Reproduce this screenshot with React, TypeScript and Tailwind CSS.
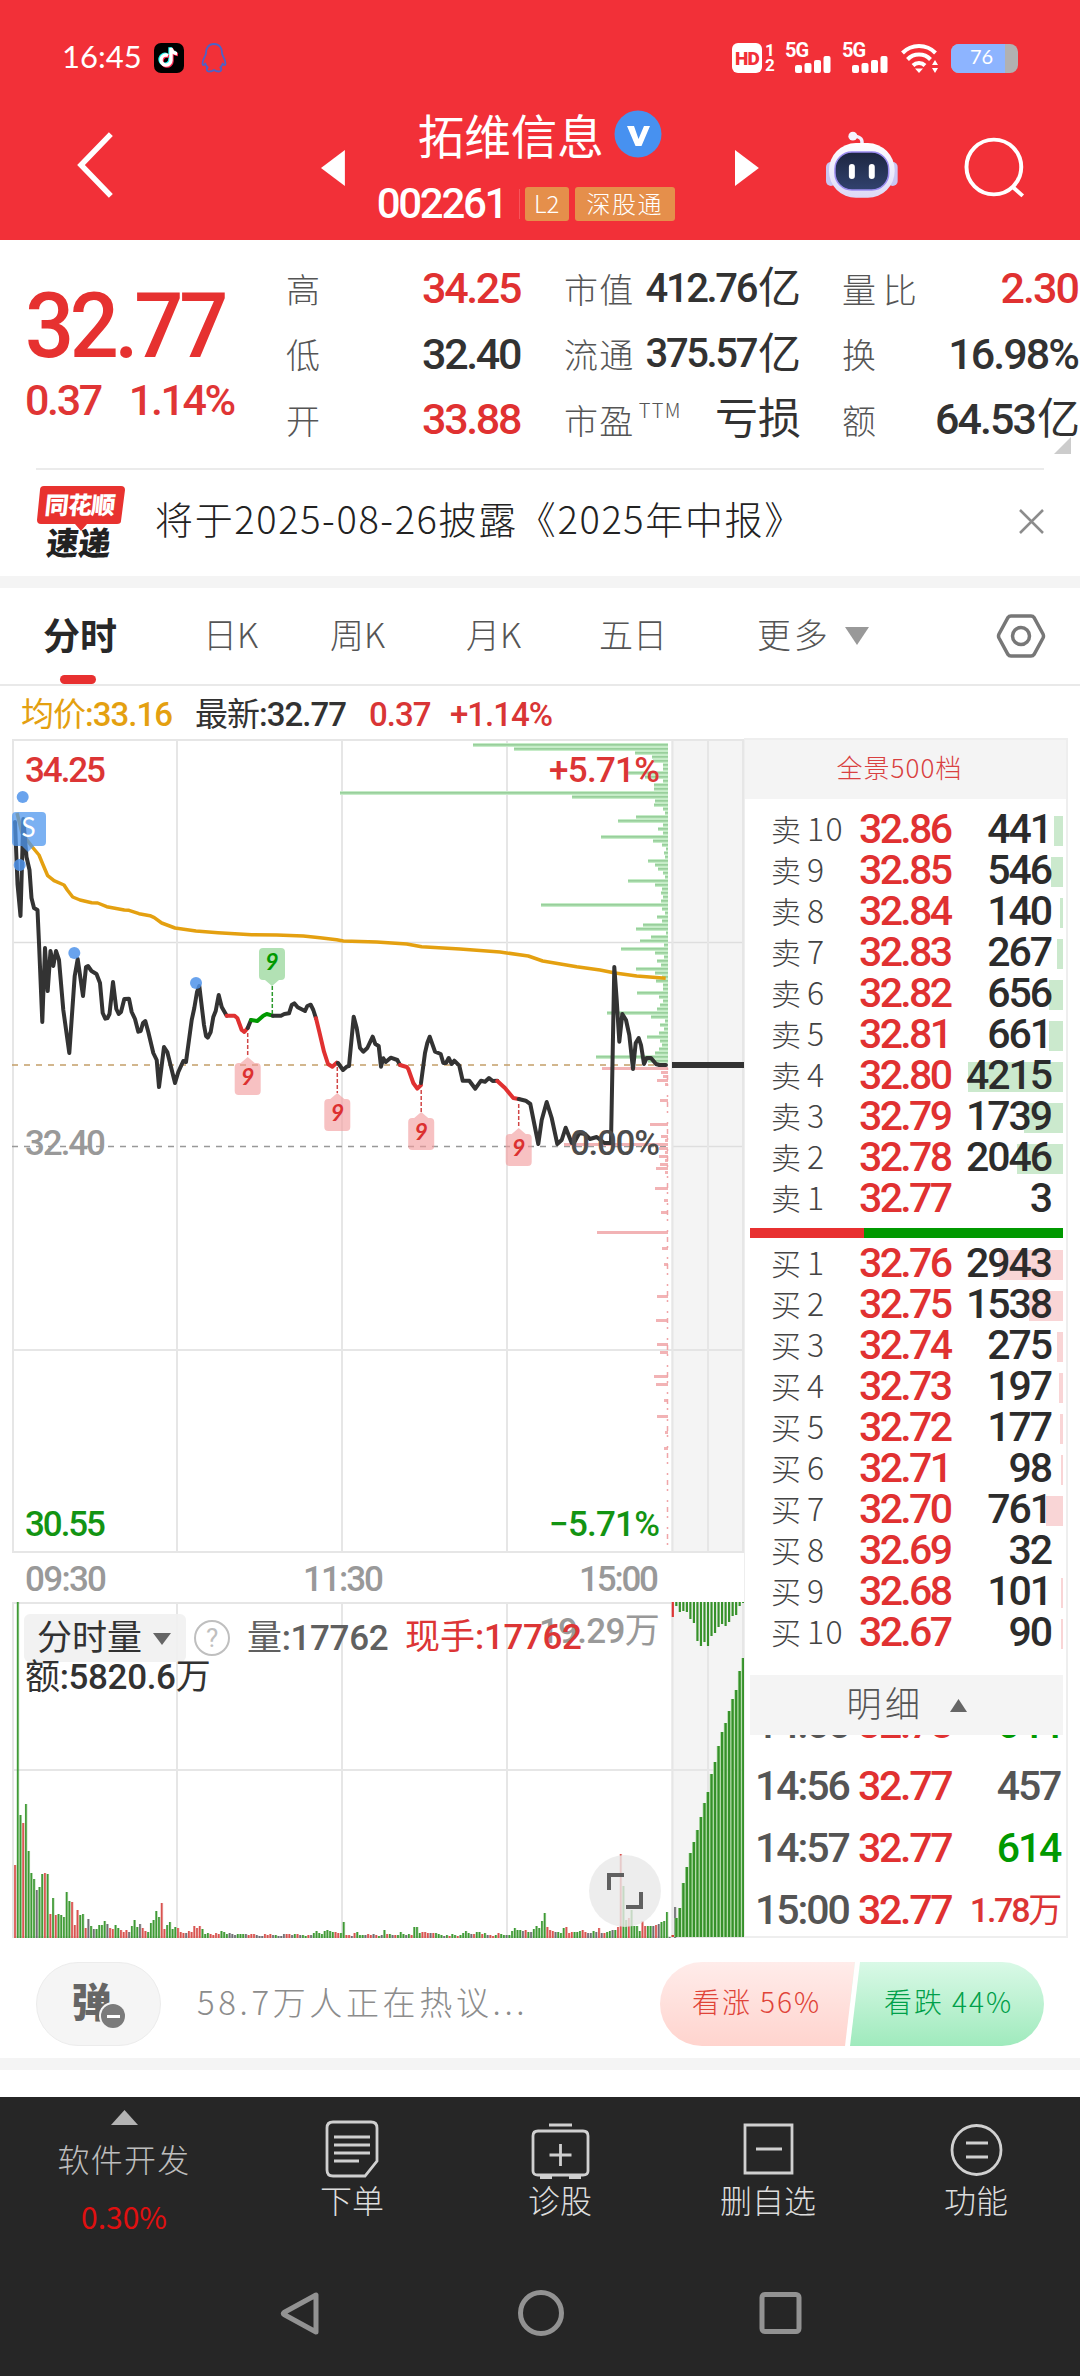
import React from 'react';
import clsx from 'clsx';

const NUM = "font-['Roboto','Noto_Sans_CJK_SC',sans-serif] font-medium whitespace-nowrap";

const stats = [
  {
    className: 'w-[236px] ml-[46px]',
    numberClass: 'text-[43px] tracking-[-0.055em]',
    labelClass: 'tracking-normal',
    rows: [
      { name: '高', value: '34.25', unit: '', red: true },
      { name: '低', value: '32.40', unit: '' },
      { name: '开', value: '33.88', unit: '', red: true },
    ],
  },
  {
    className: 'w-[237px] ml-[42px]',
    numberClass: 'text-[40px] tracking-[-0.06em]',
    labelClass: 'tracking-[0.04em]',
    rows: [
      { name: '市值', value: '412.76', unit: '亿' },
      { name: '流通', value: '375.57', unit: '亿' },
      { name: '市盈', sup: 'TTM', value: '', unit: '亏损' },
    ],
  },
  {
    className: 'w-[238px] ml-[41px]',
    numberClass: 'text-[43px] tracking-[-0.045em]',
    labelClass: 'tracking-[0.2em]',
    rows: [
      { name: '量比', value: '2.30', unit: '', red: true },
      { name: '换', value: '16.98%', unit: '' },
      { name: '额', value: '64.53', unit: '亿' },
    ],
  },
];

const tabs = [
  { name: '日K', className: 'w-[50px] ml-[85px]' },
  { name: '周K', className: 'w-[56px] ml-[77px]' },
  { name: '月K', className: 'w-[56px] ml-[80px]' },
  { name: '五日', className: 'w-[72px] ml-[77px]' },
];

const asks = [
  { level: '10', price: '32.86', volume: '441', bar: 9 },
  { level: '9', price: '32.85', volume: '546', bar: 12 },
  { level: '8', price: '32.84', volume: '140', bar: 3 },
  { level: '7', price: '32.83', volume: '267', bar: 6 },
  { level: '6', price: '32.82', volume: '656', bar: 14 },
  { level: '5', price: '32.81', volume: '661', bar: 14 },
  { level: '4', price: '32.80', volume: '4215', bar: 95 },
  { level: '3', price: '32.79', volume: '1739', bar: 39 },
  { level: '2', price: '32.78', volume: '2046', bar: 46 },
  { level: '1', price: '32.77', volume: '3', bar: 0 },
];

const bids = [
  { level: '1', price: '32.76', volume: '2943', bar: 64 },
  { level: '2', price: '32.75', volume: '1538', bar: 34 },
  { level: '3', price: '32.74', volume: '275', bar: 6 },
  { level: '4', price: '32.73', volume: '197', bar: 4 },
  { level: '5', price: '32.72', volume: '177', bar: 3 },
  { level: '6', price: '32.71', volume: '98', bar: 2 },
  { level: '7', price: '32.70', volume: '761', bar: 17 },
  { level: '8', price: '32.69', volume: '32', bar: 0 },
  { level: '9', price: '32.68', volume: '101', bar: 2 },
  { level: '10', price: '32.67', volume: '90', bar: 2 },
];

const trades = [
  { time: '14:55', price: '32.78', volume: '644', color: 'text-[#009900]' },
  { time: '14:56', price: '32.77', volume: '457', color: 'text-[#555555]' },
  { time: '14:57', price: '32.77', volume: '614', color: 'text-[#009900]' },
  { time: '15:00', price: '32.77', volume: '1.78', unit: '万', color: 'text-[#dc3535]' },
];

// price line, split where the nine-count signal changes its colour
const priceSegments = [
  {
    color: '#333333',
    points:
      '15,822 17.5,884 20.5,916 23.3,819 26.5,857 29.5,870 31.5,898 34,908 37.5,910 39,943 42.3,1022 45,948 47.7,991 50.5,951 53.3,966 56,951 59,960 63.3,1010 69.3,1053 74.7,976 77.7,959 83,996 86,967 88,966 91.5,971 96.5,974 100,983 102.7,1013 105.3,1018.7 107.5,1018 109.5,1014 113,982 116.3,1009 118.7,1014 121,1012 124.3,999 129,998.7 131.7,1012 135,1019 138.3,1031.7 140.7,1031 143,1023 145.3,1021 148.3,1032 153.3,1053 156.7,1060 159,1087 164,1047 167.3,1052 175,1083 178.3,1072 183.3,1061 186,1062 191.7,1020 194.3,1008 197,992 199.3,986 204,1025 206,1036 207.7,1037.7 210.7,1032 213.3,1017 215.7,1011 218.7,995 221.7,1007 226.7,1015.7',
  },
  { color: '#e03131', points: '226.7,1015.7 234.3,1015.7 237.3,1018 241.7,1030 244.3,1032 247.7,1028' },
  { color: '#333333', points: '247.7,1028 251,1020' },
  { color: '#009900', points: '251,1020 257.3,1021 263.3,1015.7 266.7,1014 272.7,1015.7' },
  {
    color: '#333333',
    points: '272.7,1015.7 281,1015.7 284.3,1014 289,1013.3 291.7,1005 294.3,1003.3 297.7,1007.3 305,1011 307.3,1006 310.7,1004.7 313.3,1010 316,1018.3',
  },
  { color: '#e03131', points: '316,1018.3 319.3,1031.7 324,1051.7 328,1064 332.3,1066.7 336.7,1062.7' },
  {
    color: '#333333',
    points:
      '338,1063 343,1070 346.7,1066.7 349,1066 353.7,1016.7 356.7,1028 360,1048 363.3,1051.7 367.3,1048 372.7,1036.7 375.3,1044 378.7,1046 381,1066.7 383.3,1058.3 385.7,1062 390.7,1057.7 397.3,1060 400,1065',
  },
  { color: '#e03131', points: '400,1065 406.7,1067 408.3,1069 413.3,1083 417.3,1088.7 421,1085' },
  {
    color: '#333333',
    points:
      '421,1083 425,1053 427.3,1043 429.7,1036.7 435,1051.7 440.7,1054 443.3,1063 446,1063 448.7,1058 451.7,1064 454.3,1060.7 459.3,1065.7 462.7,1080.7 469.3,1080.7 475.3,1088.7 481,1080.7 485,1081.7 489,1078 492.7,1081 497.3,1080.7',
  },
  { color: '#e03131', points: '497.3,1081 505,1088 513.3,1098 518.7,1099' },
  {
    color: '#333333',
    points:
      '518.7,1099 525.7,1100.7 530.3,1104 538.3,1144 541.7,1120 546.7,1102 551.7,1118 557.3,1144 561.7,1140 565.7,1127.7 571.7,1143 574,1143 579.3,1133 585,1134 590,1139 596.7,1137 604.3,1143 611,1143 614.3,967 616.7,1000 619.3,1041.7 622.3,1014 626,1020 629.3,1035 633,1069 635.7,1043 638.7,1038 641,1045 644,1064 646.7,1058 651,1058 656,1064 659.3,1065 666,1065',
  },
];

const averagePoints =
  '17,813 22,833 27,840 32.3,847 39,855 42.7,864 47.7,875.7 54,880.7 64,885 67.3,890 72.7,897 80,900 91.7,902.7 97.7,903 106.7,906.7 124.3,910 129,910.3 139,913.7 150,915.7 154.3,917.7 161.7,923 175,928 196,931 218,932.7 251.7,934.7 276.7,935 303.3,936 320,937.7 336.7,939.7 343.3,941 376.7,942 406.7,944 421.7,946.7 460,949 500,952 528.3,956 542.7,961 576.7,966.7 600,970 615,973 636.7,976 665.7,978.3';

// resting orders by price, one entry every 4px from the top
const askDepth = [
  195, 154, 33, 16, 15, 5, 5, 41, 23, 5, 14, 14, 328, 96, 13, 14, 5, 3, 32, 50, 5, 10, 5, 67, 15, 6, 2, 4, 3, 20, 13, 10, 5, 3, 40,
  13, 6, 7, 5, 7, 127, 6, 3, 11, 6, 25, 32, 2, 17, 28, 4, 47, 13, 4, 11, 7, 32, 13, 6, 12, 5, 5, 31, 9, 5, 8, 11, 61, 17, 3, 8, 4,
  9, 21, 8, 6, 9, 13, 72, 20,
];

const bidDepth: Record<number, number> = {
  81: 66, 82: 7, 83: 5, 84: 11, 85: 3, 89: 8, 95: 18, 98: 7, 99: 3, 100: 104, 101: 9, 102: 3, 103: 9, 104: 3, 105: 8, 106: 12,
  107: 3, 111: 13, 114: 4, 117: 7, 122: 71, 126: 6, 130: 4, 138: 11, 144: 12, 150: 11, 152: 8, 158: 14, 160: 12, 164: 4, 168: 11,
  172: 3, 176: 4,
};

const volumes =
  'r73 g336 g123 r115 g134 g87 g65 g59 k48 g51 g64 r65 g64 r24 g40 r23 g24 g23 g21 g46 g37 r36 r13 r28 g23 g24 r10 k19 g12 k9 g9 g13 g13 g17 k14 r10 r9 g13 g10 r8 r6 r8 k6 g12 g18 g11 k14 r10 r7 g6 g15 g18 g27 g21 r35 r9 g13 g16 g9 g11 r10 r6 r5 k5 r7 r6 r12 r10 r12 g9 g4 g5 r4 r3 r5 r4 g7 g6 g4 k5 k4 k3 g4 g4 g4 k4 r3 r4 r4 k3 k2 k2 r4 r3 r4 k3 g3 k2 k2 k4 r4 r4 k3 g4 r4 k3 g3 g2 r3 k3 g5 g7 g5 g4 g7 g8 g7 g6 r6 r5 g5 g16 r3 r3 k2 r5 g6 g3 g3 k3 r4 r3 k4 r3 g2 k3 g8 r4 g4 k3 r3 g3 g6 g4 k3 g4 r3 g11 g11 g5 r6 r6 r5 k5 r5 g5 g4 g3 k2 g3 r2 g4 g3 r2 g3 g5 g7 g5 k4 r4 g6 g6 r4 g5 k3 r3 r2 g3 r5 g4 g3 k3 g3 g7 g10 g8 g8 k7 r8 g6 k6 g9 g12 g10 g17 g25 r11 r8 r7 k6 g6 g5 g10 r11 r5 r6 g6 g6 g7 r8 r6 k5 k5 g7 k6 r10 k5 r5 g6 g7 k8 g8 r11 r84 g52 g18 r20 g28 g12 g12 g7 r17 r12 g12 g12 k12 r13 k14 g16 g17 g26 k1 w0 k31'.split(' ');

const auctionVolumes = [2, 19, 29, 54, 70, 84, 95, 107, 120, 134, 145, 163, 175, 191, 205, 214, 226, 238, 247, 266, 279];
const auctionUnmatched = [15, 4, 10, 9, 10, 17, 21, 39, 44, 40, 44, 34, 31, 25, 22, 24, 20, 14, 13, 4, 1];

const barColors: Record<string, string> = { r: '#d9534f', g: '#3f9a35', k: '#6f6f72', w: 'none' };

const signals = [
  { x: 247.7, from: 1033, tip: 1057 },
  { x: 337.3, from: 1067, tip: 1093 },
  { x: 421.2, from: 1090, tip: 1112 },
  { x: 518.7, from: 1104, tip: 1128 },
];

function StatusBar() {
  return (
    <div className="flex h-[76px] items-end px-[62px] pb-[3px] text-white">
      <div className="flex h-[30px] items-center">
        <span className="w-[76px] text-center font-['Lato','Noto_Sans_CJK_SC',sans-serif] text-[31px] leading-[26px] -mt-[4px]">16:45</span>
        <span className="ml-[16px] flex h-[30px] w-[30px] items-center justify-center rounded-[7px] bg-black">
          <svg width="22" height="24" viewBox="0 0 22 24" fill="none" strokeWidth="3.4">
            <path d="M10 9.500a5 5 0 1 0 3 4.700V2c.6 3.500 3 5.300 6 5.600" stroke="#25f4ee" transform="translate(-1 -.8)" />
            <path d="M10 9.500a5 5 0 1 0 3 4.700V2c.6 3.500 3 5.300 6 5.600" stroke="#fe2c55" transform="translate(1 1)" />
            <path d="M10 9.500a5 5 0 1 0 3 4.700V2c.6 3.500 3 5.300 6 5.600" stroke="#fff" />
          </svg>
        </span>
        <svg className="ml-[17px]" width="26" height="30" viewBox="0 0 26 30" fill="none" stroke="#4b63c8" strokeWidth="1.8" strokeLinejoin="round">
          <path d="M13 1C7.500 1 5 5 5 10c0 3-3.500 6-3.500 10.500 0 2 .8 2.500 2.800 0 .5 2 1.200 3 2.400 4-1.500.8-1.700 4 1.500 4 2.300 0 3.600-.6 4.800-1.500 1.200.9 2.500 1.500 4.800 1.500 3.200 0 3-3.200 1.500-4 1.200-1 1.900-2 2.400-4 2 2.500 2.800 2 2.800 0C24.500 16 21 13 21 10c0-5-2.500-9-8-9z" />
        </svg>
      </div>
      <div className="ml-auto flex h-[30px] items-end font-['Roboto',sans-serif]">
        <span className="flex h-[30px] w-[30px] items-center justify-center rounded-[6px] bg-white text-[19px] font-black leading-none tracking-[-0.04em] text-[#f22f37]">HD</span>
        <span className="ml-[3px] flex w-[10px] flex-col text-[17px] font-bold leading-[15px]">
          <span>1</span>
          <span>2</span>
        </span>
        <Signal className="ml-[10px]" />
        <Signal className="ml-[11px]" />
        <svg className="ml-[13px]" width="38" height="30" viewBox="0 0 38 30" fill="none" stroke="#fff" strokeWidth="4">
          <path d="M1.500 10a23 23 0 0 1 33 0M6.500 16.500a16 16 0 0 1 23 0M12 22.500a8.500 8.500 0 0 1 12 0" />
          <path d="M14 25.500h8L18 30zM31 22l3-5 3 5zM31 25l3 5 3-5z" fill="#fff" stroke="none" />
        </svg>
        <span className="relative ml-[12px] flex h-[29px] w-[67px] items-center justify-center overflow-hidden rounded-[8px] bg-[#b1b1b1]">
          <span className="absolute inset-y-0 left-0 w-[54px] bg-[#8db4ff]" />
          <span className="relative mr-[6px] -mt-[5px] font-['Lato',sans-serif] text-[20px] leading-none">76</span>
        </span>
      </div>
    </div>
  );
}

function Signal({ className }: { className: string }) {
  return (
    <span className={clsx('relative h-[30px] w-[46px]', className)}>
      <span className="absolute left-0 top-0 text-[20px] font-bold leading-[15px] tracking-[-0.05em]">5G</span>
      <svg className="absolute bottom-0 left-[10px]" width="36" height="17" viewBox="0 0 36 17" fill="#fff">
        <rect x="0" y="9" width="7" height="8" rx="2" />
        <rect x="9.500" y="7" width="7" height="10" rx="2" />
        <rect x="19" y="4" width="7" height="13" rx="2" />
        <rect x="28.500" y="0" width="7" height="17" rx="2" />
      </svg>
    </span>
  );
}

function TitleBar() {
  return (
    <div className="flex h-[164px] items-start pl-[77px] pr-[54px] text-white">
      <svg className="mt-[56px]" width="36" height="66" viewBox="0 0 36 66" fill="none" stroke="#fff" strokeWidth="5.500">
        <path d="M34 2 4 33l30 31" />
      </svg>
      <svg className="ml-[208px] mt-[74px]" width="24" height="36" viewBox="0 0 24 36">
        <path d="M24 0v36L0 18z" fill="#fff" />
      </svg>
      <div className="ml-[32px] w-[298px]">
        <div className="flex items-center pl-[41px] pt-[32px]">
          <span className="text-[46.5px] leading-[52px]">拓维信息</span>
          <svg className="ml-[10px]" width="48" height="48" viewBox="0 0 48 48">
            <circle cx="24" cy="24" r="23.500" fill="#4791f0" />
            <path d="M13 16h7l4.500 13L30 16h6l-8.500 20h-6z" fill="#fff" />
          </svg>
        </div>
        <div className="mt-[25px] flex h-[38px] items-center">
          <span className={clsx(NUM, 'w-[128px] text-[42px] leading-[38px] tracking-[-0.055em]')}>002261</span>
          <span className="ml-[14px] h-[30px] w-px bg-[#f6555b]" />
          <span className="ml-[5px] h-[34px] w-[44px] rounded-[3px] bg-[#e58f4b] text-center text-[24px] font-light leading-[32px]">L2</span>
          <span className="ml-[6px] h-[34px] w-[100px] shrink-0 rounded-[3px] bg-[#e58f4b] text-center text-[24px] font-light leading-[32px] tracking-[0.06em]">深股通</span>
        </div>
      </div>
      <svg className="ml-[60px] mt-[74px]" width="24" height="36" viewBox="0 0 24 36">
        <path d="M0 0v36l24-18z" fill="#fff" />
      </svg>
      <svg className="ml-[66px] mt-[55px]" width="74" height="68" viewBox="0 0 74 68">
        <defs>
          <linearGradient id="shell" x1="0" y1="0" x2="0" y2="1">
            <stop offset="0" stopColor="#fff" />
            <stop offset="1" stopColor="#dcd9f7" />
          </linearGradient>
          <linearGradient id="visor" x1="0" y1="0" x2="0" y2="1">
            <stop offset="0" stopColor="#1d2640" />
            <stop offset="1" stopColor="#31426e" />
          </linearGradient>
        </defs>
        <path d="M37 14c1-6-1-8-7-9" stroke="#f3f0ff" strokeWidth="3.500" fill="none" />
        <circle cx="28" cy="5" r="4.500" fill="#f6f4ff" />
        <rect x="1" y="31" width="10" height="24" rx="5" fill="#c9c6f2" />
        <rect x="63" y="31" width="10" height="24" rx="5" fill="#c9c6f2" />
        <rect x="4" y="12" width="66" height="55" rx="27" fill="url(#shell)" />
        <rect x="10" y="21" width="54" height="38" rx="17" fill="url(#visor)" stroke="#9c8cf0" strokeWidth="1.500" />
        <rect x="24" y="33" width="6" height="15" rx="3" fill="#fff" />
        <rect x="44" y="33" width="6" height="15" rx="3" fill="#fff" />
      </svg>
      <svg className="ml-[66px] mt-[60px]" width="62" height="62" viewBox="0 0 62 62" fill="none" stroke="#fff" strokeWidth="4">
        <circle cx="30" cy="31" r="27.500" />
        <path d="m49 51 10 9" />
      </svg>
    </div>
  );
}

function QuotePanel() {
  return (
    <section className="relative flex h-[228px] bg-white pt-[16px]">
      <div className="w-[240px] shrink-0 pl-[25px]">
        <div className={clsx(NUM, 'mt-[23px] origin-left scale-x-95 text-[91px] leading-[94px] tracking-[-0.05em] text-[#e63130]')}>32.77</div>
        <div className={clsx(NUM, 'mt-[7px] flex gap-[28px] text-[43px] leading-[40px] tracking-[-0.055em] text-[#e03535]')}>
          <span>0.37</span>
          <span>1.14%</span>
        </div>
      </div>
      {stats.map((column, index) => (
        <div key={index} className={clsx('flex shrink-0 flex-col', column.className)}>
          {column.rows.map((item) => (
            <div key={item.name} className="flex h-[65.500px] items-center justify-between">
              <span className={clsx('flex text-[34px] font-light leading-none text-[#555555]', column.labelClass)}>
                {item.name}
                {'sup' in item && <span className="-mt-[3px] ml-[4px] text-[20px]">{item.sup}</span>}
              </span>
              <span className={clsx(NUM, 'flex items-center leading-none', column.numberClass, item.red ? 'text-[#e03131]' : 'text-[#323232]')}>
                {item.value}
                <span className="ml-[2px] text-[43px] font-normal tracking-normal">{item.unit}</span>
              </span>
            </div>
          ))}
        </div>
      ))}
      <svg className="absolute right-[9px] bottom-[14px]" width="17" height="17" viewBox="0 0 17 17">
        <path d="M17 0v17H0z" fill="#cccccc" />
      </svg>
    </section>
  );
}

function NewsBar() {
  return (
    <section className="mx-[36px] flex h-[108px] items-center border-t-2 border-[#ebebeb]">
      <div className="relative h-[74px] w-[90px]">
        <svg className="absolute inset-0" width="90" height="46" viewBox="0 0 90 46">
          <path d="M8 0h77q4 0 4 4l-4 31q0 3-4 3H51l-6 7-6-7H5q-4 0-4-4L4 4q0-4 4-4z" fill="#e8322f" />
        </svg>
        <span className="absolute left-[9px] top-[3px] -skew-x-6 text-[24px] font-black leading-[30px] tracking-[-0.03em] text-white">同花顺</span>
        <span className="absolute left-[11px] top-[38px] -skew-x-6 text-[32px] font-black leading-[34px] text-[#222222]">速递</span>
      </div>
      <span className="-mt-[10px] ml-[29px] whitespace-nowrap text-[38px] font-light leading-none tracking-[0.043em] text-[#222222]">将于2025-08-26披露《2025年中报》</span>
      <svg className="-mt-[3px] ml-auto" width="25" height="25" viewBox="0 0 25 25" stroke="#8c8c8c" strokeWidth="2.500">
        <path d="m1 1 23 23M24 1 1 24" />
      </svg>
    </section>
  );
}

function Tabs() {
  return (
    <nav className="box-content flex h-[96px] items-center border-t-[12px] border-b-2 border-t-[#f4f4f4] border-b-[#e9e9e9] pl-[42px] pr-[34px] text-[34px] font-light leading-[40px] text-[#555555]">
      <div className="relative flex h-full w-[76px] items-center justify-center pb-[5px] text-[37px] font-bold text-[#282828]">
        分时
        <span className="absolute bottom-0 left-[18px] h-[9px] w-[36px] rounded-full bg-[#e83030]" />
      </div>
      {tabs.map((tab) => (
        <span key={tab.name} className={clsx('-mt-[5px] whitespace-nowrap', tab.className)}>
          {tab.name}
        </span>
      ))}
      <span className="-mt-[5px] ml-[86px] w-[76px] tracking-[0.08em]">更多</span>
      <svg className="ml-[12px]" width="24" height="18" viewBox="0 0 24 18">
        <path d="M0 0h24L12 18z" fill="#999999" />
      </svg>
      <svg className="ml-auto" width="50" height="46" viewBox="0 0 50 46" fill="none" stroke="#777777" strokeWidth="3.500">
        <path d="M15 3h20q2 0 3 1.500l9 16.500q1 2 0 4l-9 16.500q-1 1.500-3 1.500H15q-2 0-3-1.500L3 25q-1-2 0-4l9-16.500Q13 3 15 3z" />
        <circle cx="25" cy="23" r="8.500" />
      </svg>
    </nav>
  );
}

function ChartLegend() {
  return (
    <div className={clsx(NUM, 'flex h-[53px] items-center pt-[3px] pl-[21px] text-[33px] leading-none tracking-[-0.03em]')}>
      <span className="w-[174px] text-[#e4a010]">
        <span className="font-normal">均价</span>:33.16
      </span>
      <span className="w-[174px] text-[#323232]">
        <span className="font-normal">最新</span>:32.77
      </span>
      <span className="w-[81px] text-[#d93535]">0.37</span>
      <span className="text-[#d93535]">+1.14%</span>
    </div>
  );
}

function Grid() {
  return (
    <g>
      <rect x="671" y="740" width="73" height="813" fill="#f4f4f4" />
      <rect x="671" y="1602" width="73" height="335" fill="#f4f4f4" />
      <g stroke="#e6e6e6" strokeWidth="2">
        <path d="M12 740H744M12 1552H744M12 1603H672M12 1770H744M12 1937H744" />
        <path d="M12 942.500H744M672 1146.500H744M12 1350H744" strokeWidth="1.300" stroke="#dedede" />
        <path d="M13 739V1553M177 739V1553M342 739V1553M507 739V1553M672.500 739V1553M708 739V1553M743 739V1553" />
        <path d="M13 1602V1937M177 1602V1937M342 1602V1937M507 1602V1937M672.500 1602V1937M708 1602V1937M743 1602V1937" />
      </g>
      <path d="M12 1065H668" stroke="#c39e68" strokeWidth="1.700" strokeDasharray="6 6" />
      <path d="M12 1146.500H668" stroke="#999999" strokeWidth="1.700" strokeDasharray="6 6" />
    </g>
  );
}

function Depth() {
  return (
    <g>
      {askDepth.map((width, row) => (
        <g key={row}>
          <rect x={668 - width} y={743 + row * 4} width={width} height="4" fill="#c6ecc8" />
          <rect x={668 - width} y={744 + row * 4} width={width} height="1.700" fill="#98cf9b" />
        </g>
      ))}
      {Object.entries(bidDepth).map(([row, width]) => (
        <rect key={row} x={668 - width} y={743 + Number(row) * 4} width={width} height="3" fill="#f2b3b5" />
      ))}
      <path d="M667.500 1068V1552" stroke="#f0a5a8" strokeWidth="1.500" strokeDasharray="2 5 5 4 2 9" />
    </g>
  );
}

function Volume() {
  return (
    <g>
      {volumes.map((item, index) => {
        const height = Number(item.slice(1));
        return (
          <g key={index} fill={barColors[item[0]]}>
            <rect x={14 + index * 2.716} y={1938 - height} width="2.500" height={height} opacity="0.4" />
            <rect x={14.200 + index * 2.716} y={1938 - height} width="1.600" height={height} />
          </g>
        );
      })}
      {auctionVolumes.map((height, index) => (
        <g key={index}>
          <rect x={671 + index * 3.520} y={1937 - height} width="3.500" height={height} fill="#a5d69b" />
          <rect x={671.700 + index * 3.520} y={1937 - height} width="2.200" height={height} fill={index ? '#36912a' : '#dc3535'} />
          <rect x={671.700 + index * 3.520} y={1602} width="2.200" height={auctionUnmatched[index]} fill={index ? '#36912a' : '#dc3535'} />
        </g>
      ))}
    </g>
  );
}

function Markers() {
  return (
    <g>
      {signals.map(({ x, from, tip }) => (
        <g key={x}>
          <path d={`M${x} ${from}V${tip}`} stroke="#d04545" strokeWidth="1.500" strokeDasharray="4 2" />
          <path
            d={`M${x} ${tip}l7 6h2q4 0 4 4v24q0 4-4 4h-18q-4 0-4-4v-24q0-4 4-4h2z`}
            fill="#f29b9d"
            fillOpacity="0.62"
          />
          <text x={x} y={tip + 28} textAnchor="middle" fontFamily="Lato" fontStyle="italic" fontWeight="700" fontSize="23" fill="#dc3030">9</text>
        </g>
      ))}
      <path d="M272.300 986V1015" stroke="#2c9a2c" strokeWidth="1.500" strokeDasharray="4 2" />
      <path d="M272 986l-7-6h-2q-4 0-4-4v-24q0-4 4-4h18q4 0 4 4v24q0 4-4 4h-2z" fill="#83cf86" fillOpacity="0.62" />
      <text x="272" y="970" textAnchor="middle" fontFamily="Lato" fontStyle="italic" fontWeight="700" fontSize="23" fill="#009900">9</text>
      <path d="M16 812h26q4 0 4 4v26q0 4-4 4h-8l-6 6-6-6h-6q-4 0-4-4v-26q0-4 4-4z" fill="#4f97ee" fillOpacity="0.75" />
      <text x="28.500" y="837" textAnchor="middle" fontFamily="Lato" fontSize="26" fill="#fff">S</text>
      <g fill="#4f93ea" fillOpacity="0.85">
        <circle cx="22.700" cy="797" r="6" />
        <circle cx="19.700" cy="865" r="6" />
        <circle cx="74.300" cy="953" r="6" />
        <circle cx="196" cy="983" r="6" />
      </g>
    </g>
  );
}

function Chart() {
  return (
    <div className="relative ml-[12px] h-[1199px] w-[732px]">
      <svg className="block" width="732" height="1199" viewBox="12 739 732 1199">
        <Grid />
        <Depth />
        <g fontFamily="Roboto" fontSize="35" fontWeight="500">
          <text x="25" y="782" textLength="81" fill="#dc3535">34.25</text>
          <text x="549" y="782" textLength="111" fill="#dc3535">+5.71%</text>
          <text x="25" y="1155" textLength="81" fill="#999999">32.40</text>
          <text x="25" y="1536" textLength="81" fill="#139413">30.55</text>
          <text x="549" y="1536" textLength="111" fill="#139413">−5.71%</text>
          <g fill="#999999">
            <text x="25" y="1591" textLength="82">09:30</text>
            <text x="303" y="1591" textLength="81">11:30</text>
            <text x="579" y="1591" textLength="80">15:00</text>
          </g>
        </g>
        <polyline points={averagePoints} fill="none" stroke="#e4a010" strokeWidth="3.500" strokeLinejoin="round" />
        {priceSegments.map((segment, index) => (
          <polyline key={index} points={segment.points} fill="none" stroke={segment.color} strokeWidth="4" strokeLinejoin="round" strokeLinecap="round" />
        ))}
        <path d="M672 1065H744" stroke="#333333" strokeWidth="6" />
        <text x="570" y="1155" textLength="90" fontFamily="Roboto" fontSize="35" fontWeight="500" fill="#4c4c4c">0.00%</text>
        <Volume />
        <Markers />
      </svg>

      {/* Volume header */}
      <div className={clsx(NUM, 'absolute left-[12px] top-[875px] flex h-[48px] items-center text-[35px] leading-none tracking-[-0.01em]')}>
        <button className="flex h-[48px] w-[162px] items-center rounded-[6px] bg-[#f1f1f1]/90 pl-[13px] font-normal tracking-normal text-[#323232]">
          分时量
          <svg className="ml-[11px]" width="18" height="13" viewBox="0 0 18 13">
            <path d="M0 1h18L9 13z" fill="#666666" />
          </svg>
        </button>
        <span className="ml-[8px] flex h-[36px] w-[36px] items-center justify-center rounded-full border-[2.5px] border-[#bfbfbf] text-[26px] font-normal text-[#bfbfbf]">?</span>
        <span className="ml-[17px] text-[#606060]">
          <span className="font-normal">量</span>:17762
        </span>
      </div>
      <span className={clsx(NUM, 'absolute right-[85px] top-[873px] text-[35px] leading-[40px] tracking-[-0.02em] text-[#999999]')}>
        19.29<span className="font-normal">万</span>
      </span>
      <span className={clsx(NUM, 'absolute left-[393px] top-[875px] text-[35px] leading-[48px] tracking-[-0.01em] text-[#dc3535]')}>
        <span className="font-normal tracking-normal">现手</span>:17762
      </span>
      <span className={clsx(NUM, 'absolute left-[13px] top-[919px] text-[35px] leading-[40px] tracking-[-0.01em] text-[#323232]')}>
        <span className="font-normal">额</span>:5820.6<span className="font-normal">万</span>
      </span>

      {/* Fullscreen toggle */}
      <button className="absolute left-[577px] top-[1116px] flex h-[72px] w-[72px] items-center justify-center rounded-full bg-[#e8e8e8]/80">
        <svg width="38" height="38" viewBox="0 0 38 38" fill="none" stroke="#606060" strokeWidth="4">
          <path d="M18 3H3v15M20 35h15V20" />
        </svg>
      </button>
    </div>
  );
}

function BookRow({ side, level, price, volume, bar }: { side: string; level: string; price: string; volume: string; bar: number }) {
  return (
    <div className="relative flex h-[41px] items-center pl-[21px] pr-[12px]">
      <span
        className={clsx('absolute right-0 top-[7px] h-[30px]', side === '卖' ? 'bg-[#cbe9cd]' : 'bg-[#f9d5d6]')}
        style={{ width: bar }}
      />
      <span className="relative -mt-[4px] w-[36px] text-[30px] font-light leading-none text-[#444444]">{side}</span>
      <span className="relative -mt-[6px] w-[52px] text-[32px] font-light leading-none tracking-[0.04em] text-[#444444]">{level}</span>
      <span className={clsx(NUM, 'relative text-[41px] leading-none tracking-[-0.065em] text-[#e03131]')}>{price}</span>
      <span className={clsx(NUM, 'relative ml-auto text-[41px] leading-none tracking-[-0.05em] text-[#2c2c2c]')}>{volume}</span>
    </div>
  );
}

function OrderBook() {
  return (
    <aside className="h-[1200px] w-[324px] border-2 border-l border-[#eeeeee] bg-white">
      <div className="flex h-[59px] items-center justify-center bg-[#f4f4f4] pr-[12px] pb-[5px] text-[26px] font-light leading-none tracking-[0.04em] text-[#d94040]">全景500档</div>
      <div className="pr-[3px] pl-[5px]">
        <div className="pt-[10px]">
          {asks.map((row) => (
            <BookRow key={row.price} side="卖" {...row} />
          ))}
        </div>
        <div className="mt-[9px] mb-[5px] flex h-[10px] bg-[#009900]">
          <span className="w-[114px] bg-[#e83030]" />
        </div>
        {bids.map((row) => (
          <BookRow key={row.price} side="买" {...row} />
        ))}
        <div className="mt-[22px] flex h-[60px] items-center justify-center bg-[#f4f4f4] text-[35px] font-light leading-none tracking-[0.1em] text-[#555555]">
          <span className="-mt-[7px]">明细</span>
          <svg className="ml-[26px]" width="17" height="13" viewBox="0 0 17 13">
            <path d="M8.500 0 17 13H0z" fill="#666666" />
          </svg>
        </div>
        <div className="flex h-[206px] flex-col justify-end overflow-hidden">
          {trades.map((trade) => (
            <div key={trade.time} className={clsx(NUM, 'flex h-[62px] shrink-0 items-center pl-[5px] pr-[3px] text-[41px] leading-none tracking-[-0.055em] text-[#555555]')}>
              <span className="w-[103px] tracking-[-0.05em]">{trade.time}</span>
              <span className="text-[#e03131]">{trade.price}</span>
              <span className={clsx('ml-auto', trade.color, trade.unit && 'text-[34px]')}>
                {trade.volume}
                <span className="font-normal">{trade.unit}</span>
              </span>
            </div>
          ))}
        </div>
      </div>
    </aside>
  );
}

function CommentBar() {
  return (
    <section className="flex h-[133px] items-start border-b-[12px] border-[#f4f4f4] pt-[25px] pl-[36px] pr-[36px]">
      <button className="relative flex h-[84px] w-[125px] items-center justify-center rounded-full border border-[#ececec] bg-[#f5f5f5] pr-[14px] pb-[8px] text-[40px] font-black leading-none text-[#666666]">
        弹
        <span className="absolute left-[64px] top-[41px] flex h-[24px] w-[24px] items-center justify-center rounded-full bg-[#7b7b7b] ring-2 ring-[#f5f5f5]">
          <span className="h-[3px] w-[13px] bg-white" />
        </span>
      </button>
      <span className="ml-[36px] whitespace-nowrap text-[33px] font-light leading-[78px] tracking-[0.11em] text-[#8c8c8c]">58.7万人正在热议...</span>
      <div className="relative ml-auto flex h-[84px] w-[384px] overflow-hidden rounded-full text-[28px] leading-[79px] font-light tracking-[0.07em]">
        <span className="w-[190px] whitespace-nowrap bg-linear-to-b from-[#ffecea] to-[#ffd4ce] pl-[32px] text-[#e04338]">看涨 56%</span>
        <span className="flex-1 whitespace-nowrap bg-linear-to-b from-[#d9f9e7] to-[#9feabd] pl-[34px] text-[#00a04a]">看跌 44%</span>
        <svg className="absolute left-[180px] top-0" width="30" height="84" viewBox="0 0 30 84">
          <defs>
            <linearGradient id="rise" x1="0" y1="0" x2="0" y2="1">
              <stop offset="0" stopColor="#ffecea" />
              <stop offset="1" stopColor="#ffd4ce" />
            </linearGradient>
            <linearGradient id="fall" x1="0" y1="0" x2="0" y2="1">
              <stop offset="0" stopColor="#d9f9e7" />
              <stop offset="1" stopColor="#9feabd" />
            </linearGradient>
          </defs>
          <path d="M0 0h15L5 84H0z" fill="url(#rise)" />
          <path d="M20 0h10v84H10z" fill="url(#fall)" />
          <path d="M15 0h5L10 84H5z" fill="#fff" />
        </svg>
      </div>
    </section>
  );
}

const actions = [
  {
    name: '下单',
    icon: (
      <>
        <path d="M10 3h38q6 0 6 6v33L42 57H10q-6 0-6-6V9q0-6 6-6z" />
        <path d="M11 18h36M11 26h36M11 34h36M11 42h25" />
      </>
    ),
  },
  {
    name: '诊股',
    icon: (
      <>
        <path d="M18 6h23M7 12h45q5 0 5 5v35q0 4-5 4H7q-5 0-5-4V17q0-5 5-5zM29.500 25v22M18.500 36h22" />
        <path d="M9 58h12M38 58h12" strokeWidth="4" />
      </>
    ),
  },
  {
    name: '删自选',
    icon: <path d="M6 6h47v48H6zM17 30h26" />,
  },
  {
    name: '功能',
    icon: (
      <>
        <circle cx="29.500" cy="31" r="24.500" />
        <path d="M19 24h22M19 38h22" />
      </>
    ),
  },
];

function BottomBar() {
  return (
    <footer className="mt-[27px] h-[279px] bg-[#262626]">
      <div className="flex h-[152px] text-[32px] font-light leading-none text-[#dddddd]">
        <div className="flex w-[248px] flex-col items-center pt-[13px]">
          <svg width="27" height="15" viewBox="0 0 27 15">
            <path d="M13.500 0 27 15H0z" fill="#b3b3b3" />
          </svg>
          <span className="mt-[17px] tracking-[0.04em] text-[#bdbdbd]">软件开发</span>
          <span className="mt-[27px] text-[30px] font-normal text-[#e01010]">0.30%</span>
        </div>
        {actions.map((action) => (
          <div key={action.name} className="flex w-[208px] flex-col items-center pt-[22px]">
            <svg width="59" height="60" viewBox="0 0 59 60" fill="none" stroke="#d0d0d0" strokeWidth="2.800">
              {action.icon}
            </svg>
            <span className="mt-[4px]">{action.name}</span>
          </div>
        ))}
      </div>
      <div className="flex h-[127px] items-start pl-[279px] pt-[40px]">
        <svg width="42" height="48" viewBox="0 0 42 48" fill="none" stroke="#929292" strokeWidth="5" strokeLinejoin="round">
          <path d="M37 6v37L5 25.500q-1.500-1 0-2z" />
        </svg>
        <svg className="ml-[196px]" width="48" height="48" viewBox="0 0 48 48" fill="none" stroke="#929292" strokeWidth="5">
          <circle cx="24" cy="24" r="20.500" />
        </svg>
        <svg className="ml-[192px]" width="48" height="48" viewBox="0 0 48 48" fill="none" stroke="#929292" strokeWidth="5">
          <rect x="5" y="5.500" width="37" height="37" rx="3" />
        </svg>
      </div>
    </footer>
  );
}

export default function App() {
  return (
    <div className="h-[2376px] w-[1080px] overflow-hidden bg-white font-['Noto_Sans_CJK_SC',sans-serif]">
      <header className="h-[240px] bg-[#f23038]">
        <StatusBar />
        <TitleBar />
      </header>
      <QuotePanel />
      <NewsBar />
      <Tabs />
      <div className="flex h-[1251px]">
        <div className="w-[744px]">
          <ChartLegend />
          <Chart />
        </div>
        <div className="pt-[52px]">
          <OrderBook />
        </div>
      </div>
      <CommentBar />
      <BottomBar />
    </div>
  );
}
